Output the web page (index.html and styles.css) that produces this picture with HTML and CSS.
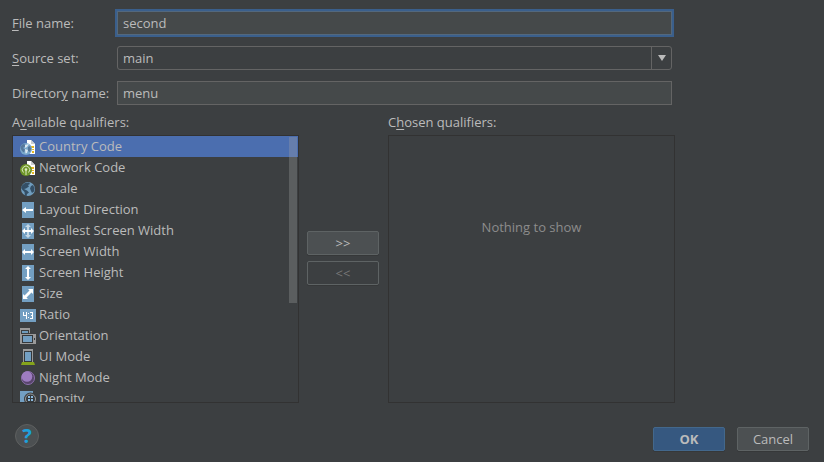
FILE: index.html
```
<!DOCTYPE html>
<html lang="en">
<head>
    <meta charset="UTF-8">
    <title>New Resource File</title>
    <link rel="stylesheet" href="styles.css">
</head>
<body>

<form class="dialog" onsubmit="return false">
    <div class="content">
        <div class="fields">
            <label for="file-name"><u>F</u>ile name:</label>
            <input id="file-name" class="field focused" type="text" value="second">

            <label for="source-set"><u>S</u>ource set:</label>
            <div class="combo">
                <select id="source-set">
                    <option>main</option>
                </select>
                <span class="combo-arrow">
                    <svg width="8" height="6" viewBox="0 0 8 6"><path d="M0 0h8L4 6z" fill="#bbb"/></svg>
                </span>
            </div>

            <label for="directory">Director<u>y</u> name:</label>
            <input id="directory" class="field" type="text" value="menu">
        </div>

        <div class="qualifiers">
            <div class="panel">
                <div class="panel-title" id="available">A<u>v</u>ailable qualifiers:</div>
                <div class="box">
                    <ul class="list" role="listbox" aria-labelledby="available">
                        <li class="item selected" role="option" aria-selected="true">
                            <svg class="icon" viewBox="0 0 16 16">
                                <path d="M7 1h4l4 4v10H7z" fill="#fff"/>
                                <path d="M11 1l4 4h-4z" fill="#c9cdd0"/>
                                <path d="M11 7h3v2h-3zM12 10h2v1h-2zM12 12h2v2h-2z" fill="#e8b820"/>
                                <circle cx="6" cy="10" r="6" fill="#7aa9cc"/>
                                <path d="M1 7l2-2 2 .5 0 2-2 1.500 2 1.500-1 3L2 12 .5 9zM8 8l2-1 1 3-1 3-2-1z" fill="#55789c"/>
                                <path d="M5 6l4-1-2 3-2 1zM5 10l3 1-1 3-1.500.5z" fill="#dbe8f2"/>
                            </svg>
                            <span>Country Code</span>
                        </li>
                        <li class="item" role="option">
                            <svg class="icon" viewBox="0 0 16 16">
                                <path d="M7 1h4l4 4v10H7z" fill="#fff"/>
                                <path d="M11 1l4 4h-4z" fill="#c9cdd0"/>
                                <path d="M11 7h3v2h-3zM12 10h2v1h-2zM12 12h2v2h-2z" fill="#e8b820"/>
                                <circle cx="6" cy="10" r="6" fill="#6f9628"/>
                                <path d="M3.500 12.500a3.700 3.700 0 1 1 5 0M6 10v5" fill="none" stroke="#dfebc4"/>
                                <circle cx="6" cy="9.500" r="1.300" fill="#dfebc4"/>
                            </svg>
                            <span>Network Code</span>
                        </li>
                        <li class="item" role="option">
                            <svg class="icon" viewBox="0 0 16 16">
                                <circle cx="8" cy="8" r="7" fill="#6f9dbe"/>
                                <path d="M2 4.500L5 2l4-.5 1 1.500-2 1 1 1.500-3 2-2 .5 3 1.500 2 2-2 1.500-.5 2.500-1.500-.5L4.500 11 2.500 9 1.200 7zM11 5l2-1 1.500 3-.5 3.500-2 1.500-1-2-1-2.500z" fill="#344f66"/>
                            </svg>
                            <span>Locale</span>
                        </li>
                        <li class="item" role="option">
                            <svg class="icon" viewBox="0 0 16 16">
                                <path d="M2 0h12v16H2z" fill="#739fc2"/>
                                <path d="M2 8l4-3v2h7v2H6v2z" fill="#fff"/>
                            </svg>
                            <span>Layout Direction</span>
                        </li>
                        <li class="item" role="option">
                            <svg class="icon" viewBox="0 0 16 16">
                                <path d="M2 0h12v16H2z" fill="#739fc2"/>
                                <path d="M8 1l3 3H9v8h2l-3 3-3-3h2V4H5z" fill="#c5d8e6"/>
                                <path d="M2 8l3-3v2h6V5l3 3-3 3V9H5v2z" fill="#fff"/>
                            </svg>
                            <span>Smallest Screen Width</span>
                        </li>
                        <li class="item" role="option">
                            <svg class="icon" viewBox="0 0 16 16">
                                <path d="M2 0h12v16H2z" fill="#739fc2"/>
                                <path d="M2 8l3-3v2h6V5l3 3-3 3V9H5v2z" fill="#fff"/>
                            </svg>
                            <span>Screen Width</span>
                        </li>
                        <li class="item" role="option">
                            <svg class="icon" viewBox="0 0 16 16">
                                <path d="M2 0h12v16H2z" fill="#739fc2"/>
                                <path d="M8 1l3 3H9v8h2l-3 3-3-3h2V4H5z" fill="#fff"/>
                            </svg>
                            <span>Screen Height</span>
                        </li>
                        <li class="item" role="option">
                            <svg class="icon" viewBox="0 0 16 16">
                                <path d="M2 0h12v16H2z" fill="#739fc2"/>
                                <path d="M13 3v5l-1.500-1.500-5 5L8 13H3V8l1.500 1.500 5-5L8 3z" fill="#fff"/>
                            </svg>
                            <span>Size</span>
                        </li>
                        <li class="item" role="option">
                            <svg class="icon" viewBox="0 0 16 16">
                                <path d="M0 2h16v13H0z" fill="#739fc2"/>
                                <path d="M3 5h1v3h2V5h1v7H6V9H3zM8 6h1v1H8zM8 10h1v1H8zM10 5h3v7h-3v-1h2V9h-1V8h1V6h-2z" fill="#fff"/>
                            </svg>
                            <span>Ratio</span>
                        </li>
                        <li class="item" role="option">
                            <svg class="icon" viewBox="0 0 16 16">
                                <path d="M.5 16V1h9v4" fill="none" stroke="#9a9a9a"/>
                                <path d="M0 0h10v2H0z" fill="#9a9a9a"/>
                                <path d="M2 3h6v2H2z" fill="#6f9dbe"/>
                                <path d="M1 6h15v10H1z" fill="#9a9a9a"/>
                                <path d="M2 7h11v8H2z" fill="#34393c"/>
                                <path d="M3 8h9v6H3z" fill="#739fc2"/>
                                <path d="M14 10h1v2h-1z" fill="#34393c"/>
                            </svg>
                            <span>Orientation</span>
                        </li>
                        <li class="item" role="option">
                            <svg class="icon" viewBox="0 0 16 16">
                                <path d="M3 0h10v13H3z" fill="#9a9a9a"/>
                                <path d="M4 2h8v11H4z" fill="#34393c"/>
                                <path d="M5 3h6v9H5z" fill="#739fc2"/>
                                <path d="M2 13h12l1 3H1z" fill="#85a41c"/>
                            </svg>
                            <span>UI Mode</span>
                        </li>
                        <li class="item" role="option">
                            <svg class="icon" viewBox="0 0 16 16">
                                <circle cx="8" cy="8" r="6.500" fill="#58446c" stroke="#8d70ad"/>
                                <circle cx="7" cy="6.500" r="5.300" fill="#9d7cc0"/>
                            </svg>
                            <span>Night Mode</span>
                        </li>
                        <li class="item" role="option">
                            <svg class="icon" viewBox="0 0 16 16">
                                <path d="M0 0h13v16H0z" fill="#739fc2"/>
                                <circle cx="10.500" cy="8" r="6.500" fill="#3c3f41"/>
                                <circle cx="10.500" cy="8" r="5" fill="#34393c" stroke="#9a9a9a"/>
                                <path d="M8 5h2v2H8zM11 5h2v2h-2zM8 8h2v2H8zM11 8h2v2h-2z" fill="#8dbbe0"/>
                            </svg>
                            <span>Density</span>
                        </li>
                    </ul>
                    <div class="thumb"></div>
                </div>
            </div>

            <div class="movers">
                <button class="button" type="button">&gt;&gt;</button>
                <button class="button" type="button" disabled>&lt;&lt;</button>
            </div>

            <div class="panel">
                <div class="panel-title">C<u>h</u>osen qualifiers:</div>
                <div class="box empty">Nothing to show</div>
            </div>
        </div>
    </div>

    <div class="footer">
        <button class="help" type="button" aria-label="Help">?</button>
        <button class="button primary" type="submit">OK</button>
        <button class="button" type="button">Cancel</button>
    </div>
</form>

</body>
</html>
```
FILE: styles.css
```
* {
    box-sizing: border-box;
}
body {
    margin: 0;
    background-color: #3c3f41;
    color: #bbbbbb;
    font-family: "Open Sans", "Noto Sans", sans-serif;
    font-size: 13px;
    line-height: 18px;
}
input, select, button {
    font: inherit;
    color: inherit;
}
u {
    text-underline-offset: 2px;
}
.dialog {
    padding: 11px 15px 11px 12px;
}
.content {
    margin-right: 134px;
}
.fields {
    display: grid;
    grid-template-columns: 105px 1fr;
    row-gap: 11px;
    align-items: center;
    margin-right: 3px;
}
.field {
    width: 100%;
    height: 24px;
    padding: 0 5px;
    background-color: #45494a;
    border: 1px solid #646464;
    border-radius: 0;
    outline: none;
}
.focused {
    border-color: #53687d;
    box-shadow: 0 0 0 2px #3a5f8c;
}
.combo {
    display: flex;
    height: 24px;
    border: 1px solid #646464;
    border-radius: 3px;
}
.combo select {
    flex: 1;
    appearance: none;
    padding: 0 5px;
    background: none;
    border: 0;
    outline: none;
}
.combo-arrow {
    display: flex;
    align-items: center;
    justify-content: center;
    width: 20px;
    border-left: 1px solid #646464;
}
.qualifiers {
    display: flex;
    margin-top: 8px;
}
.panel {
    flex: 1;
}
.panel-title {
    margin-bottom: 4px;
}
.box {
    position: relative;
    height: 268px;
    overflow: hidden;
    border: 1px solid #323232;
}
.list {
    margin: 0;
    padding: 0;
    list-style: none;
}
.item {
    display: flex;
    align-items: flex-start;
    gap: 3px;
    height: 21px;
    padding-left: 7px;
    line-height: 20px;
}
.selected {
    background-color: #4b6eaf;
}
.icon {
    width: 16px;
    height: 16px;
    margin-top: 3px;
}
.thumb {
    position: absolute;
    top: 1px;
    right: 1px;
    width: 8px;
    height: 166px;
    background-color: rgba(166, 166, 166, 0.3);
}
.empty {
    display: flex;
    justify-content: center;
    padding-top: 82px;
    color: #8c8c8c;
}
.movers {
    display: flex;
    flex-direction: column;
    gap: 6px;
    padding: 118px 9px 0 8px;
}
.button {
    width: 72px;
    height: 24px;
    padding: 0;
    background-color: #4c5052;
    border: 1px solid #5e6364;
    border-radius: 2px;
    box-shadow: 0 1px 0 #363839;
}
.button:disabled {
    background: none;
    color: #777777;
}
.primary {
    background-color: #365880;
    border-color: #43688c;
    font-weight: bold;
}
.footer {
    display: flex;
    align-items: flex-end;
    gap: 12px;
    margin-top: 21px;
}
.help {
    width: 24px;
    height: 24px;
    margin-left: 3px;
    margin-right: auto;
    margin-bottom: 3px;
    padding: 0;
    background-color: #4c5052;
    border: 1px solid #5e6060;
    border-radius: 50%;
    color: #1ea0dc;
    font-size: 20px;
    font-weight: bold;
    line-height: 22px;
}
```
